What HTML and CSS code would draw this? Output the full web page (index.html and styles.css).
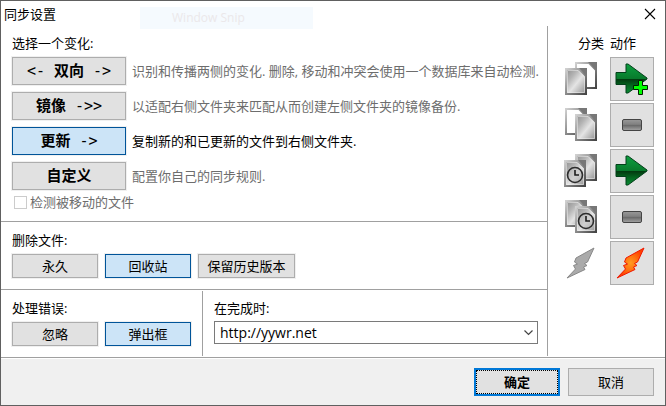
FILE: index.html
```html
<!DOCTYPE html>
<html lang="zh-CN">
<head>
<meta charset="utf-8">
<title>同步设置</title>
<link rel="stylesheet" href="styles.css">
</head>
<body>
<svg class="defs" width="0" height="0" aria-hidden="true">
  <defs>
    <linearGradient id="paper" x1="0" y1="0" x2="1" y2="1"><stop offset="0" stop-color="#8c8c8c"/><stop offset=".3" stop-color="#b4b4b4"/><stop offset=".55" stop-color="#e4e4e4"/><stop offset="1" stop-color="#8c8c8c"/></linearGradient>
    <linearGradient id="edge" x1="0" y1="0" x2="1" y2="1"><stop offset="0" stop-color="#d0d0d0"/><stop offset=".5" stop-color="#8a8a8a"/><stop offset="1" stop-color="#444"/></linearGradient>
    <linearGradient id="green" x1="0" y1="0" x2="0" y2="1"><stop offset="0" stop-color="#0c9f40"/><stop offset=".5" stop-color="#087a2c"/><stop offset=".53" stop-color="#023a10"/><stop offset=".75" stop-color="#046820"/><stop offset="1" stop-color="#0a8a34"/></linearGradient>
    <linearGradient id="bar" x1="0" y1="0" x2="0" y2="1"><stop offset="0" stop-color="#999"/><stop offset=".45" stop-color="#808080"/><stop offset=".5" stop-color="#666"/><stop offset="1" stop-color="#a4a4a4"/></linearGradient>
    <radialGradient id="fire"><stop offset="0" stop-color="#ff9c20"/><stop offset=".5" stop-color="#ff7010"/><stop offset="1" stop-color="#ff4000"/></radialGradient>
    <symbol id="sheet" viewBox="0 0 22 27"><path d="M1 1H14L21 8V26H1Z" fill="url(#paper)" stroke="url(#edge)" stroke-width="2"/><path d="M2.500 2.500H13L19.500 9V24.500H2.500Z" fill="none" stroke="#f2f2f2" stroke-width="1" opacity=".5"/><path d="M14 0H22V9Z" fill="#777"/></symbol>
    <symbol id="blank" viewBox="0 0 22 27"><path d="M1 1H14L21 8V26H1Z" fill="#fff" stroke="url(#edge)" stroke-width="2"/><path d="M13 0H22V9Z" fill="#777"/></symbol>
    <symbol id="clock" viewBox="0 0 18 18"><circle cx="9" cy="9" r="7.500" fill="#bbb" fill-opacity=".5" stroke="#2c2c2c" stroke-width="1.600"/><path d="M9 4V9H13" fill="none" stroke="#1c1c1c" stroke-width="1.600"/></symbol>
    <symbol id="arrow" viewBox="0 0 34 32"><path d="M1 9.500H11V1H13L32 15V16L13 30H11V21.500H1Z" fill="url(#green)" stroke="#03401a"/></symbol>
    <symbol id="minus" viewBox="0 0 20 12"><rect x=".5" y=".5" width="19" height="11" rx="1.500" fill="url(#bar)" stroke="#444"/></symbol>
    <symbol id="bolt" viewBox="0 0 30 32"><path d="M28 1L10 11L8.500 15L11.500 17L7.500 18.500L9.500 22L1 31L19 22.500L17.500 20L21 18.500L18.500 16.500L21.500 15Z"/></symbol>
  </defs>
</svg>
<main class="dialog">
  <header class="titlebar">
    <h1>同步设置</h1>
    <span class="ghost">Window Snip</span>
    <button class="close" aria-label="关闭"><svg width="12" height="12" viewBox="0 0 12 12"><path d="M1 1L11 11M11 1L1 11" stroke="#000" stroke-width="1.100"/></svg></button>
  </header>
  <div class="content">
    <div class="settings">
      <section class="variants">
        <h2>选择一个变化:</h2>
        <div class="variant"><button class="btn wide"><span>&lt;- </span>双向<span> -&gt;</span></button><p>识别和传播两侧的变化. 删除, 移动和冲突会使用一个数据库来自动检测.</p></div>
        <div class="variant"><button class="btn wide">镜像<span> -&gt;&gt;</span></button><p>以适配右侧文件夹来匹配从而创建左侧文件夹的镜像备份.</p></div>
        <div class="variant active"><button class="btn wide selected">更新<span> -&gt;</span></button><p>复制新的和已更新的文件到右侧文件夹.</p></div>
        <div class="variant"><button class="btn wide">自定义</button><p>配置你自己的同步规则.</p></div>
        <label class="check"><input type="checkbox" disabled>检测被移动的文件</label>
      </section>
      <section class="group deletion">
        <h2>删除文件:</h2>
        <div class="row"><button class="btn">永久</button><button class="btn selected">回收站</button><button class="btn history">保留历史版本</button></div>
      </section>
      <div class="bottom">
        <section class="group errors">
          <h2>处理错误:</h2>
          <div class="row"><button class="btn">忽略</button><button class="btn selected">弹出框</button></div>
        </section>
        <section class="group finish">
          <h2><label for="done">在完成时:</label></h2>
          <div class="combo"><input id="done" type="text" value="http://yywr.net"><button aria-label="展开"><svg width="9" height="6" viewBox="0 0 9 6"><path d="M.5 .5L4.500 4.500L8.500 .5" fill="none" stroke="#444" stroke-width="1.200"/></svg></button></div>
        </section>
      </div>
    </div>
    <aside class="actions">
      <div class="heads"><span>分类</span><span>动作</span></div>
      <div class="action"><svg width="34" height="34"><use href="#blank" x="11" y="0" width="22" height="27"/><use href="#sheet" x="1" y="6" width="22" height="27"/></svg><button aria-label="复制新文件到右侧"><svg width="34" height="34"><use href="#arrow" y="1" width="34" height="32"/><path d="M23.500 18.500h4v5h5v4h-5v5h-4v-5h-5v-4h5z" fill="#0f0" stroke="#020"/></svg></button></div>
      <div class="action"><svg width="34" height="34"><use href="#blank" x="1" y="0" width="22" height="27"/><use href="#sheet" x="11" y="6" width="22" height="27"/></svg><button aria-label="不执行操作"><svg width="20" height="12"><use href="#minus" width="20" height="12"/></svg></button></div>
      <div class="action"><svg width="34" height="34"><use href="#sheet" x="11" y="0" width="22" height="27"/><use href="#sheet" x="0" y="6" width="22" height="27"/><use href="#clock" x="2" y="12" width="18" height="18"/></svg><button aria-label="更新右侧"><svg width="34" height="34"><use href="#arrow" y="1" width="34" height="32"/></svg></button></div>
      <div class="action"><svg width="34" height="34"><use href="#sheet" x="1" y="0" width="22" height="27"/><use href="#sheet" x="11" y="6" width="22" height="27"/><use href="#clock" x="13" y="12" width="18" height="18"/></svg><button aria-label="不执行操作"><svg width="20" height="12"><use href="#minus" width="20" height="12"/></svg></button></div>
      <div class="action"><svg width="34" height="32" fill="#aaa" stroke="#888"><use href="#bolt" x="2" width="30" height="32"/></svg><button aria-label="冲突"><svg width="34" height="32" fill="url(#fire)" stroke="#f01800"><use href="#bolt" x="1" width="30" height="32"/></svg></button></div>
    </aside>
  </div>
  <footer class="footer"><button class="btn ok">确定</button><button class="btn">取消</button></footer>
</main>
</body>
</html>
```
FILE: styles.css
```css
* { box-sizing: border-box; }
body {
  margin: 0;
  font: 13px/18px "Open Sans", "Noto Sans CJK SC", sans-serif;
  color: #000;
  background: #fff;
}
button, input { font: inherit; color: inherit; }
h1, h2, p { margin: 0; font: inherit; }
svg { display: block; flex: none; }
.defs { position: absolute; }
.dialog {
  display: flex;
  flex-direction: column;
  min-height: 100vh;
  border: 1px solid #606060;
}
.titlebar {
  display: flex;
  align-items: center;
  height: 25px;
  padding: 0 9px 0 3px;
}
.ghost {
  width: 173px;
  height: 22px;
  margin: 6px 0 -3px 84px;
  padding: 0 32px;
  line-height: 22px;
  font-size: 12px;
  color: #ebe8ea;
  background: #f5fafe;
}
.close { margin-left: auto; padding: 0; border: 0; background: none; }
.content { display: flex; flex: 1; }
.settings { flex: 1; border-right: 1px solid #a0a0a0; margin-bottom: 1px; }
.variants { height: 196px; padding: 8px 8px 0 11px; border-bottom: 1px solid #a0a0a0; }
.variants h2 { margin-bottom: 5px; }
.variant { display: flex; align-items: center; gap: 6px; margin-bottom: 7px; color: #6d6d6d; white-space: nowrap; }
.variant:nth-last-child(2) { margin-bottom: 3px; }
.variant.active { color: #000; }
.btn {
  width: 86px;
  height: 24px;
  padding: 0;
  border: 1px solid #adadad;
  background: #e1e1e1;
  color: #000;
  line-height: 20px;
  white-space: nowrap;
  box-shadow: 0 0 0 1px #f0f0f0;
}
.btn.wide {
  width: 114px;
  height: 28px;
  font: bold 15px/20px "DejaVu Sans Mono", "Noto Sans CJK SC", sans-serif;
}
.btn.wide span { font-weight: normal; white-space: pre; }
.btn.selected { border-color: #005499; background: #cce4f7; }
.btn.history { width: 97px; }
.check { display: flex; align-items: center; gap: 3px; padding-left: 2px; color: #6d6d6d; }
.check input { appearance: none; width: 13px; height: 13px; margin: 0; border: 1px solid #ccc; background: #fff; }
.group { padding: 9px 11px 0; }
.group h2 { margin-bottom: 5px; }
.deletion { height: 68px; border-bottom: 1px solid #a0a0a0; }
.row { display: flex; gap: 7px; }
.bottom { display: flex; padding-top: 1px; height: 66px; }
.bottom .group { padding-top: 8px; }
.errors { width: 202px; border-right: 1px solid #a0a0a0; }
.finish { flex: 1; }
.finish h2 { margin-bottom: 4px; }
.finish.group { padding-right: 9px; }
.combo { display: flex; height: 23px; border: 1px solid #7a7a7a; }
.combo input { flex: 1; min-width: 0; border: 0; padding: 0 5px; outline: 0; background: none; font-size: 14px; }
.combo button { width: 17px; padding: 0; border: 0; background: none; display: grid; place-items: center; }
.actions { width: 118px; padding: 8px 11px 0 16px; }
.heads { display: flex; gap: 6px; margin-bottom: 5px; padding-left: 14px; }
.action { display: flex; align-items: center; justify-content: space-between; margin-bottom: 2px; }
.action button { width: 44px; height: 44px; padding: 0; border: 1px solid #adadad; background: #e1e1e1; display: grid; place-items: center; }
.footer { display: flex; justify-content: flex-end; gap: 8px; height: 48px; padding: 10px 11px 0; background: #f0f0f0; border-top: 1px solid #a0a0a0; box-shadow: inset 0 1px #fff; }
.footer .btn { height: 28px; box-shadow: none; }
.footer .ok { border: 2px solid #0078d7; font-weight: bold; outline: 1px dotted #000; outline-offset: -3px; }
```
